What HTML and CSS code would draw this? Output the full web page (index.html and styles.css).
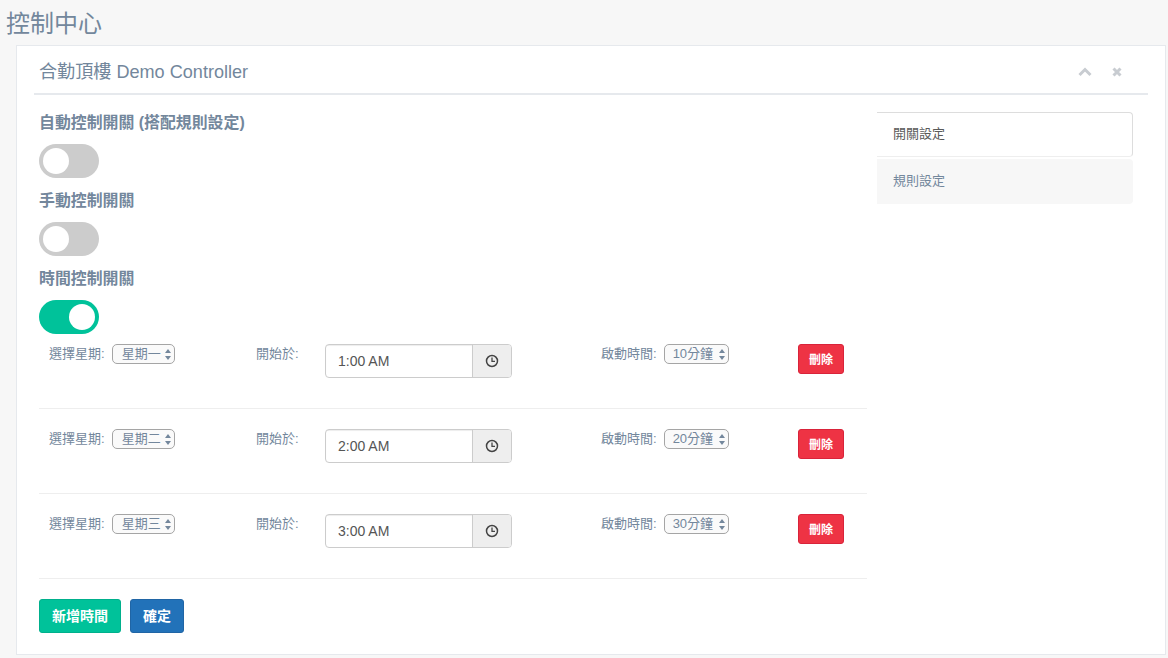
FILE: index.html
```html
<!DOCTYPE html>
<html lang="zh-Hant">
<head>
<meta charset="utf-8">
<title>控制中心</title>
<link rel="stylesheet" href="styles.css">
</head>
<body>
<h1 class="page-title">控制中心</h1>
<section class="card">
  <header class="card-head">
    <h2 class="card-title">合勤頂樓 Demo Controller</h2>
    <div class="card-tools">
      <svg class="tool" width="14" height="10" viewBox="0 0 14 10"><path d="M1.500 8 7 2.500 12.500 8" fill="none" stroke="#c8ccd1" stroke-width="3"/></svg>
      <svg class="tool" width="10" height="10" viewBox="0 0 10 10"><path d="M1.500 1.500 8.500 8.500M8.500 1.500 1.500 8.500" fill="none" stroke="#c8ccd1" stroke-width="3"/></svg>
    </div>
  </header>
  <div class="card-body">
    <div class="main">
      <div class="field-label">自動控制開關 (搭配規則設定)</div>
      <div class="switch"><span class="thumb"></span></div>
      <div class="field-label">手動控制開關</div>
      <div class="switch"><span class="thumb"></span></div>
      <div class="field-label">時間控制開關</div>
      <div class="switch on"><span class="thumb"></span></div>

      <div class="rows">
        <div class="row">
          <div class="cell"><span class="lbl">選擇星期:</span><span class="select">星期一<svg class="arrows" width="6" height="11" viewBox="0 0 6 11"><path d="M3 0 6 4H0zM3 11 0 7h6z"/></svg></span></div>
          <div class="cell"><span class="lbl lbl-time">開始於:</span><div class="time"><span class="time-val">1:00 AM</span><span class="time-btn"><svg width="14" height="14" viewBox="0 0 14 14"><circle cx="7" cy="7" r="5.500" fill="none" stroke="#444" stroke-width="1.500"/><path d="M7 3.500V7.300H10" fill="none" stroke="#444" stroke-width="1.300"/></svg></span></div></div>
          <div class="cell"><span class="lbl">啟動時間:</span><span class="select">10分鐘<svg class="arrows" width="6" height="11" viewBox="0 0 6 11"><path d="M3 0 6 4H0zM3 11 0 7h6z"/></svg></span></div>
          <div class="cell-del"><button class="btn-del">刪除</button></div>
        </div>
        <div class="row">
          <div class="cell"><span class="lbl">選擇星期:</span><span class="select">星期二<svg class="arrows" width="6" height="11" viewBox="0 0 6 11"><path d="M3 0 6 4H0zM3 11 0 7h6z"/></svg></span></div>
          <div class="cell"><span class="lbl lbl-time">開始於:</span><div class="time"><span class="time-val">2:00 AM</span><span class="time-btn"><svg width="14" height="14" viewBox="0 0 14 14"><circle cx="7" cy="7" r="5.500" fill="none" stroke="#444" stroke-width="1.500"/><path d="M7 3.500V7.300H10" fill="none" stroke="#444" stroke-width="1.300"/></svg></span></div></div>
          <div class="cell"><span class="lbl">啟動時間:</span><span class="select">20分鐘<svg class="arrows" width="6" height="11" viewBox="0 0 6 11"><path d="M3 0 6 4H0zM3 11 0 7h6z"/></svg></span></div>
          <div class="cell-del"><button class="btn-del">刪除</button></div>
        </div>
        <div class="row">
          <div class="cell"><span class="lbl">選擇星期:</span><span class="select">星期三<svg class="arrows" width="6" height="11" viewBox="0 0 6 11"><path d="M3 0 6 4H0zM3 11 0 7h6z"/></svg></span></div>
          <div class="cell"><span class="lbl lbl-time">開始於:</span><div class="time"><span class="time-val">3:00 AM</span><span class="time-btn"><svg width="14" height="14" viewBox="0 0 14 14"><circle cx="7" cy="7" r="5.500" fill="none" stroke="#444" stroke-width="1.500"/><path d="M7 3.500V7.300H10" fill="none" stroke="#444" stroke-width="1.300"/></svg></span></div></div>
          <div class="cell"><span class="lbl">啟動時間:</span><span class="select">30分鐘<svg class="arrows" width="6" height="11" viewBox="0 0 6 11"><path d="M3 0 6 4H0zM3 11 0 7h6z"/></svg></span></div>
          <div class="cell-del"><button class="btn-del">刪除</button></div>
        </div>
      </div>

      <div class="actions">
        <button class="btn btn-green">新增時間</button>
        <button class="btn btn-blue">確定</button>
      </div>
    </div>
    <nav class="tabs">
      <a class="tab active">開關設定</a>
      <a class="tab tab-rest">規則設定</a>
    </nav>
  </div>
</section>
</body>
</html>
```
FILE: styles.css
```css
* { box-sizing: border-box; }
html, body { height: 100%; }
body {
  margin: 0;
  background: #f7f7f7;
  color: #73879c;
  font-family: "Liberation Sans", "Noto Sans CJK TC", sans-serif;
  font-size: 13px;
  overflow: hidden;
}
.page-title {
  margin: 0;
  padding: 9px 0 0 6px;
  height: 45px;
  font-size: 24px;
  line-height: 30px;
  font-weight: 400;
}
.card {
  margin: 0 2px 0 16px;
  height: 610px;
  padding: 0 17px 0 17px;
  background: #fff;
  border: 1px solid #e6e9ed;
}
.card-head {
  display: flex;
  align-items: center;
  justify-content: space-between;
  height: 49px;
  border-bottom: 2px solid #e6e9ed;
  padding: 4px 26px 0 5px;
}
.card-title {
  margin: 0;
  font-size: 18.100px;
  font-weight: 400;
  line-height: 24px;
}
.card-tools { display: flex; align-items: center; gap: 20px; margin-top: 1px; }
.tool { display: block; }
.card-body { display: flex; padding-top: 17px; padding-left: 5px; }
.main { width: 828px; }
.field-label {
  height: 20px;
  margin-bottom: 12px;
  padding-top: 1px;
  font-size: 15.900px;
  line-height: 20px;
  font-weight: 700;
}
.switch {
  width: 60px;
  height: 34px;
  margin-bottom: 12px;
  padding: 4px;
  border-radius: 17px;
  background: #ccc;
}
.switch.on { background: #00c29a; padding-left: 30px; margin-bottom: 10px; }
.thumb { display: block; width: 26px; height: 26px; border-radius: 50%; background: #fff; }
.row {
  display: grid;
  grid-template-columns: 207px 345px 207px 69px;
  height: 65px;
  margin-bottom: 20px;
  border-bottom: 1px solid #eee;
}
.rows { display: block; }
.cell { display: flex; align-items: flex-start; padding-left: 10px; }
.lbl { font-size: 13px; line-height: 19px; font-weight: 400; margin-right: 7px; }
.lbl-time { width: 69px; margin-right: 0; }
.select {
  display: flex;
  align-items: center;
  justify-content: space-between;
  width: 65px;
  height: 20px;
  padding: 0 3px 3px 8px;
  border: 1px solid #a5a5a5;
  border-radius: 5px;
  font-size: 13px;
  background: #fafafa;
}
.cell:first-child .select { width: 63px; padding-left: 9px; }
.arrows { fill: #73879c; flex: none; margin-top: 3px; }
.time {
  display: flex;
  width: 187px;
  height: 34px;
  border: 1px solid #ccc;
  border-radius: 4px;
  overflow: hidden;
}
.time-val {
  flex: 1;
  padding-left: 12px;
  font-size: 14px;
  line-height: 32px;
  color: #555;
  box-shadow: inset 0 1px 1px rgba(0,0,0,.075);
}
.time-btn {
  display: flex;
  align-items: center;
  justify-content: center;
  width: 39px;
  background: #eee;
  border-left: 1px solid #ccc;
}
.btn-del {
  display: block;
  width: 46px;
  height: 30px;
  padding: 0 0 2px;
  border: 1px solid #d9233a;
  border-radius: 3px;
  background: #ee3344;
  color: #fff;
  font: 700 12px "Liberation Sans", "Noto Sans CJK TC", sans-serif;
}
.cell-del { padding-left: 0; }
.actions { display: flex; gap: 9px; }
.btn {
  height: 34px;
  padding: 0 12px 2px;
  border: 1px solid;
  border-radius: 3px;
  color: #fff;
  font: 700 14px "Liberation Sans", "Noto Sans CJK TC", sans-serif;
}
.btn-green { background: #00c29a; border-color: #00b08c; }
.btn-blue { background: #2272b9; border-color: #2065a5; }
.tabs { width: 256px; margin-left: 10px; }
.tab {
  display: block;
  height: 45px;
  margin-bottom: 2px;
  padding-left: 16px;
  border-radius: 0 4px 4px 0;
  font-size: 13px;
  background: #f7f7f7;
}
.tab-rest { line-height: 44px; }
.tab.active {
  line-height: 41px;
  background: #fff;
  color: #5a5a5a;
  border: 1px solid #ddd;
  border-left: 0;
  border-bottom-color: #eee;
}
```
